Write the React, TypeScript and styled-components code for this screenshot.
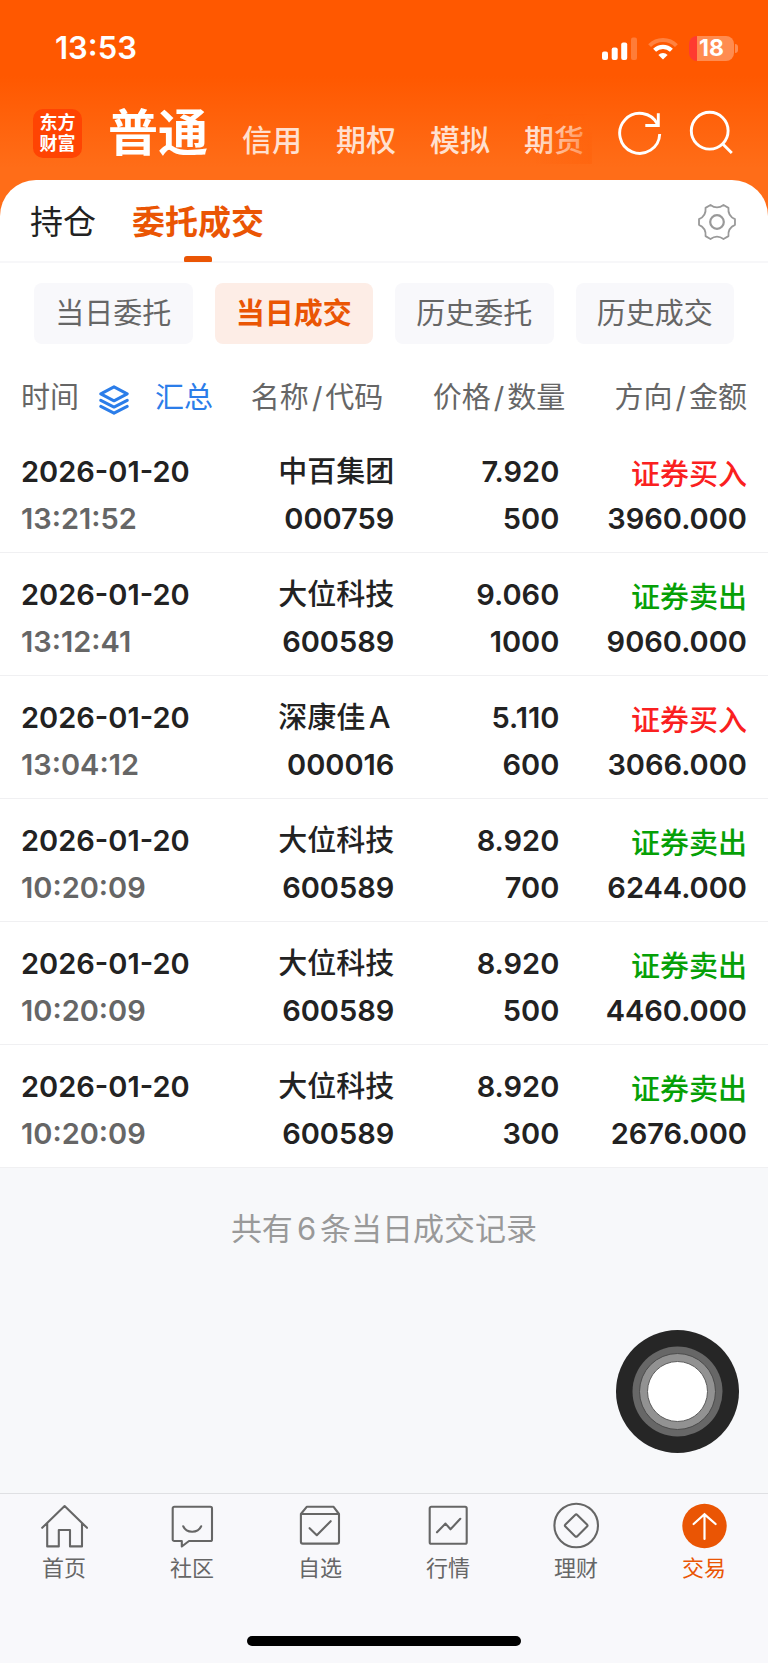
import React from "react";
import styled, { createGlobalStyle } from "styled-components";

const color = {
  accent: "#ea5504",
  text: "#222222",
  muted: "#666666",
  faint: "#999999",
  blue: "#2b7de9",
  buy: "#fa2020",
  sell: "#06a006",
  page: "#f7f8fa",
};

const GlobalStyle = createGlobalStyle`
  *, *::before, *::after { box-sizing: border-box; }
  body {
    margin: 0;
    background: ${color.page};
    color: ${color.text};
    font-family: Inter, "Noto Sans CJK SC", sans-serif;
  }
  button { margin: 0; padding: 0; border: 0; background: none; color: inherit; font: inherit; cursor: pointer; }
  a { color: inherit; text-decoration: none; }
  svg { display: block; flex: none; }
`;

const Page = styled.div`
  display: flex;
  flex-direction: column;
  min-height: 100vh;
`;

const Header = styled.header`
  height: 232px;
  background: linear-gradient(#ff5800 0, #ff5800 76px, #ff6d18 168px);
  color: #fff;
`;

const StatusBar = styled.div`
  display: flex;
  align-items: center;
  justify-content: space-between;
  height: 96px;
  padding: 0 29px 0 55px;
`;

const Clock = styled.time`
  font-size: 31px;
  font-weight: 600;
  line-height: 40px;
`;

const StatusIcons = styled.div`
  display: flex;
  align-items: center;
  gap: 11px;
`;

const Battery = styled.div`
  position: relative;
  width: 45px;
  height: 25px;
  margin-right: 5px;
  border-radius: 8px;
  background: linear-gradient(90deg, #ff3b30 8px, #ff8c50 8px);
  font-size: 23px;
  font-weight: 700;
  line-height: 25px;
  text-align: center;

  &::after {
    content: "";
    position: absolute;
    top: 8px;
    right: -4px;
    width: 3px;
    height: 9px;
    border-radius: 0 4px 4px 0;
    background: #ff8c50;
  }
`;

const AccountBar = styled.div`
  display: flex;
  align-items: center;
  height: 74px;
  padding: 0 34px 0 33px;
`;

const Logo = styled.div`
  flex: none;
  width: 49px;
  height: 49px;
  padding-top: 4px;
  border-radius: 10px;
  background: #ff4403;
  font-family: "Liberation Sans", "Noto Sans CJK SC", sans-serif;
  font-size: 18px;
  font-weight: 700;
  line-height: 21px;
  text-align: center;
`;

const AccountTabs = styled.nav`
  position: relative;
  display: flex;
  flex: 1;
  align-items: baseline;
  gap: 34px;
  min-width: 0;
  height: 78px;
  margin-right: 24px;
  padding-left: 26px;
  overflow: hidden;
  white-space: nowrap;

  &::after {
    content: "";
    position: absolute;
    top: 0;
    right: 0;
    width: 56px;
    height: 74px;
    background: linear-gradient(90deg, rgba(255, 100, 14, 0), rgba(255, 100, 14, 0.7));
    mask-image: linear-gradient(transparent 20px, #000 40px);
    mask-size: 100% 70px;
    mask-repeat: no-repeat;
  }
`;

const AccountTab = styled.button<{ $active?: boolean }>`
  flex: none;
  color: ${(p) => (p.$active ? "#fff" : "#ffe0d0")};
  font-size: ${(p) => (p.$active ? 50 : 30)}px;
  font-weight: ${(p) => (p.$active ? 700 : 500)};
  line-height: 78px;
`;

const HeaderActions = styled.div`
  display: flex;
  gap: 22px;
`;

const Sheet = styled.main`
  flex: 1;
  margin-top: -52px;
`;

const SectionTabs = styled.div`
  display: flex;
  align-items: stretch;
  gap: 36px;
  height: 83px;
  padding: 0 32px 0 30px;
  border-bottom: 2px solid #f7f7f9;
  border-radius: 36px 36px 0 0;
  background: #fff;
`;

const SectionTab = styled.button<{ $active?: boolean }>`
  position: relative;
  padding-top: 2px;
  color: ${(p) => (p.$active ? color.accent : color.text)};
  font-size: 33px;
  font-weight: ${(p) => (p.$active ? 700 : 400)};
  line-height: 78px;

  &::after {
    content: "";
    display: ${(p) => (p.$active ? "block" : "none")};
    position: absolute;
    bottom: -1px;
    left: calc(50% - 14px);
    width: 28px;
    height: 6px;
    border-radius: 3px 3px 1px 1px;
    background: ${color.accent};
  }
`;

const SettingsButton = styled.button`
  margin-left: auto;
  padding-top: 2px;
  color: ${color.faint};
`;

const Filters = styled.div`
  display: grid;
  grid-template-columns: repeat(4, 1fr);
  gap: 22px;
  padding: 20px 34px 21px;
  background: #fff;
`;

const Filter = styled.button<{ $active?: boolean }>`
  height: 61px;
  padding-top: 1px;
  border-radius: 8px;
  background: ${(p) => (p.$active ? "#fdede6" : "#f8f8fb")};
  color: ${(p) => (p.$active ? color.accent : color.muted)};
  font-size: 29px;
  font-weight: ${(p) => (p.$active ? 700 : 400)};
  line-height: 60px;
`;

const Table = styled.table`
  width: 100%;
  border-collapse: separate;
  border-spacing: 0;
  table-layout: fixed;
  background: #fff;
  font-size: 29px;
`;

const HeadCell = styled.th<{ $width: string; $end?: number }>`
  width: ${(p) => p.$width};
  height: 65px;
  padding: 0 ${(p) => p.$end ?? 0}px 0 0;
  color: ${color.muted};
  font-weight: 400;
  line-height: 44px;
  text-align: right;
  white-space: nowrap;

  &:first-child { padding-left: 21px; text-align: left; }
`;

const Slash = styled.span`
  margin: 0 3px;
`;

const TimeHead = styled.div`
  display: flex;
  align-items: center;
  gap: 20px;
`;

const SummaryButton = styled.button`
  display: flex;
  align-items: center;
  gap: 26px;
  color: ${color.blue};

  svg { margin-top: 4px; }
`;

const Cell = styled.td<{ $end?: number }>`
  padding: 18px ${(p) => p.$end ?? 0}px 10px 0;
  border-bottom: 1px solid #f0f0f2;
  font-weight: 600;
  line-height: 47px;
  text-align: right;
  white-space: nowrap;

  &:first-child { padding-left: 21px; text-align: left; }
`;

const Line = styled.div`
  height: 47px;
`;

const Name = styled(Line)`
  font-weight: 500;
`;

const Time = styled(Line)`
  color: ${color.muted};
`;

const Side = styled(Line)<{ $buy: boolean }>`
  padding-top: 3px;
  color: ${(p) => (p.$buy ? color.buy : color.sell)};
  font-weight: 500;
`;

const Total = styled.p`
  margin: 0;
  padding: 39px 0;
  color: ${color.faint};
  font-size: 31px;
  line-height: 44px;
  text-align: center;
`;

const Count = styled.span`
  margin: 0 4px;
`;

const AssistiveTouch = styled.button`
  position: fixed;
  right: 29px;
  bottom: 210px;
`;

const TabBar = styled.footer`
  padding: 8px 0 17px;
  border-top: 1px solid #dfe0e3;
  background: #f8f8fb;
`;

const TabList = styled.nav`
  display: grid;
  grid-template-columns: repeat(6, 1fr);
`;

const TabLink = styled.a<{ $active?: boolean }>`
  display: flex;
  flex-direction: column;
  align-items: center;
  color: ${(p) => (p.$active ? color.accent : color.muted)};
  font-size: 22px;
  line-height: 36px;
`;

const HomeIndicator = styled.div`
  width: 274px;
  height: 10px;
  margin: 50px auto 0;
  border-radius: 5px;
  background: #000;
`;

function SignalIcon() {
  return (
    <svg width="35" height="23" viewBox="0 0 35 23" fill="#fff" aria-hidden="true">
      <rect x="0" y="14.5" width="6" height="8.5" rx="2" />
      <rect x="9.7" y="10.5" width="6" height="12.5" rx="2" />
      <rect x="19.2" y="5.5" width="6" height="17.5" rx="2" />
      <rect x="29" y="0.5" width="6" height="22.5" rx="2" opacity=".22" />
    </svg>
  );
}

function WifiIcon() {
  return (
    <svg width="30" height="23" viewBox="0 0 30 23" fill="none" stroke="#fff" aria-hidden="true">
      <path d="M1.6 8.6a19 19 0 0 1 26.8 0" strokeWidth="4" opacity=".25" />
      <path d="M6.6 13.3a12 12 0 0 1 16.8 0" strokeWidth="4.2" />
      <path d="M15 22.6l-4.6-4.7a6.6 6.6 0 0 1 9.2 0z" fill="#fff" stroke="none" />
    </svg>
  );
}

function RefreshIcon() {
  return (
    <svg width="48" height="48" viewBox="0 0 48 48" fill="none" stroke="#fff" strokeWidth="2.9" aria-hidden="true">
      <path d="M43.7 25A20 20 0 1 1 41.6 15.4" />
      <path d="M42.3 4.2v12.3H29.3" />
    </svg>
  );
}

function SearchIcon() {
  return (
    <svg width="48" height="48" viewBox="0 0 48 48" fill="none" stroke="#fff" strokeWidth="2.9" aria-hidden="true">
      <circle cx="23.7" cy="21.7" r="18.4" />
      <path d="M36.8 35l9 9" />
    </svg>
  );
}

const polar = (deg: number, r: number) => {
  const a = (deg * Math.PI) / 180;
  return `${(19 + r * Math.cos(a)).toFixed(2)} ${(19 + r * Math.sin(a)).toFixed(2)}`;
};

const gearPath =
  `M${polar(-9, 18.2)}` +
  [0, 60, 120, 180, 240, 300]
    .map((t) => `L${polar(t + 9, 18.2)}C${polar(t + 21, 14)} ${polar(t + 39, 14)} ${polar(t + 51, 18.2)}`)
    .join("") +
  "Z";

function GearIcon() {
  return (
    <svg width="38" height="38" viewBox="0 0 38 38" fill="none" stroke="currentColor" strokeWidth="1.8" strokeLinejoin="round" aria-hidden="true">
      <path d={gearPath} />
      <circle cx="19" cy="19" r="6.8" strokeWidth="2.2" />
    </svg>
  );
}

function LayersIcon() {
  return (
    <svg width="30" height="30" viewBox="0 0 30 30" fill="none" stroke="currentColor" strokeWidth="3" strokeLinejoin="round" strokeLinecap="round" aria-hidden="true">
      <path d="M15 1.8L28.2 8.8 15 15.8 1.8 8.8z" />
      <path d="M1.8 15.3L15 22.1l13.2-6.8" />
      <path d="M1.8 21.4L15 28.2l13.2-6.8" />
    </svg>
  );
}

function TabIcon({ children }: { children: React.ReactNode }) {
  return (
    <svg width="48" height="48" viewBox="0 0 48 48" fill="none" stroke="currentColor" strokeWidth="2.1" strokeLinejoin="round" strokeLinecap="round" aria-hidden="true">
      {children}
    </svg>
  );
}

const tabs = [
  { label: "首页", icon: <path d="M2.2 25.8L24.6 4 47 25.8M7.2 21.5V44.4H18.8V28H30V44.4H42V21.5" /> },
  {
    label: "社区",
    icon: (
      <>
        <path d="M6.3 4.8H42.4a1.6 1.6 0 0 1 1.6 1.6V37.4a1.6 1.6 0 0 1-1.6 1.6H21L13.8 44.5V39H6.3a1.6 1.6 0 0 1-1.6-1.6V6.4a1.6 1.6 0 0 1 1.6-1.6z" />
        <path d="M15.2 24.3C18.5 31.6 29.8 31.6 33.2 24.3" />
      </>
    ),
  },
  {
    label: "自选",
    icon: (
      <>
        <path d="M4.9 12L10.7 4.8H37.6L43 12V39.8a1.8 1.8 0 0 1-1.8 1.8H6.7a1.8 1.8 0 0 1-1.8-1.8zM4.9 12H43" />
        <path d="M13.6 26.2L20.8 33.2 34.7 19.2" />
      </>
    ),
  },
  {
    label: "行情",
    icon: (
      <>
        <rect x="5.7" y="4.8" width="37" height="37" rx="1.6" />
        <path d="M13 30.3L21.5 21.6 26.5 27.3 36.3 16.8" />
      </>
    ),
  },
  {
    label: "理财",
    icon: (
      <>
        <circle cx="24.2" cy="23.5" r="21.8" />
        <path d="M23.1 12.9a1.6 1.6 0 0 1 2.2 0L35 22.4a1.6 1.6 0 0 1 0 2.2L25.3 34.2a1.6 1.6 0 0 1-2.2 0L13.4 24.6a1.6 1.6 0 0 1 0-2.2z" />
      </>
    ),
  },
  {
    label: "交易",
    active: true,
    icon: (
      <>
        <circle cx="24.5" cy="24" r="22.2" fill="currentColor" stroke="none" />
        <path d="M24.5 37V12.3M13.6 22L24.5 12.3 35.6 22" stroke="#fff" strokeWidth="2.2" strokeLinejoin="miter" />
      </>
    ),
  },
];

const columns = [
  { top: "名称", bottom: "代码", width: "22%", end: 16 },
  { top: "价格", bottom: "数量", width: "22%", end: 3 },
  { top: "方向", bottom: "金额", width: "26%", end: 21 },
];

const trades = [
  { time: "13:21:52", name: "中百集团", code: "000759", price: "7.920", qty: "500", buy: true, amount: "3960.000" },
  { time: "13:12:41", name: "大位科技", code: "600589", price: "9.060", qty: "1000", buy: false, amount: "9060.000" },
  { time: "13:04:12", name: "深康佳Ａ", code: "000016", price: "5.110", qty: "600", buy: true, amount: "3066.000" },
  { time: "10:20:09", name: "大位科技", code: "600589", price: "8.920", qty: "700", buy: false, amount: "6244.000" },
  { time: "10:20:09", name: "大位科技", code: "600589", price: "8.920", qty: "500", buy: false, amount: "4460.000" },
  { time: "10:20:09", name: "大位科技", code: "600589", price: "8.920", qty: "300", buy: false, amount: "2676.000" },
];

export default function App() {
  return (
    <Page>
      <GlobalStyle />
      <Header>
        <StatusBar>
          <Clock>13:53</Clock>
          <StatusIcons>
            <SignalIcon />
            <WifiIcon />
            <Battery>18</Battery>
          </StatusIcons>
        </StatusBar>
        <AccountBar>
          <Logo>东方<br />财富</Logo>
          <AccountTabs>
            <AccountTab $active>普通</AccountTab>
            {["信用", "期权", "模拟", "期货"].map((t) => (
              <AccountTab key={t}>{t}</AccountTab>
            ))}
          </AccountTabs>
          <HeaderActions>
            <button aria-label="刷新"><RefreshIcon /></button>
            <button aria-label="搜索"><SearchIcon /></button>
          </HeaderActions>
        </AccountBar>
      </Header>

      <Sheet>
        <SectionTabs>
          <SectionTab>持仓</SectionTab>
          <SectionTab $active>委托成交</SectionTab>
          <SettingsButton aria-label="设置"><GearIcon /></SettingsButton>
        </SectionTabs>
        <Filters>
          <Filter>当日委托</Filter>
          <Filter $active>当日成交</Filter>
          <Filter>历史委托</Filter>
          <Filter>历史成交</Filter>
        </Filters>
        <Table>
          <thead>
            <tr>
              <HeadCell scope="col" $width="30%">
                <TimeHead>
                  时间
                  <SummaryButton><LayersIcon />汇总</SummaryButton>
                </TimeHead>
              </HeadCell>
              {columns.map((c) => (
                <HeadCell key={c.top} scope="col" $width={c.width} $end={c.end}>
                  {c.top}<Slash>/</Slash>{c.bottom}
                </HeadCell>
              ))}
            </tr>
          </thead>
          <tbody>
            {trades.map((t, i) => (
              <tr key={i}>
                <Cell>
                  <Line>2026-01-20</Line>
                  <Time>{t.time}</Time>
                </Cell>
                <Cell $end={5}>
                  <Name>{t.name}</Name>
                  <Line>{t.code}</Line>
                </Cell>
                <Cell $end={9}>
                  <Line>{t.price}</Line>
                  <Line>{t.qty}</Line>
                </Cell>
                <Cell $end={21}>
                  <Side $buy={t.buy}>{t.buy ? "证券买入" : "证券卖出"}</Side>
                  <Line>{t.amount}</Line>
                </Cell>
              </tr>
            ))}
          </tbody>
        </Table>
        <Total>共有<Count>6</Count>条当日成交记录</Total>
      </Sheet>

      <AssistiveTouch aria-label="辅助触控">
        <svg width="123" height="123" viewBox="0 0 123 123" aria-hidden="true">
          <circle cx="61.5" cy="61.5" r="61.5" fill="#262626" />
          <circle cx="61.5" cy="61.5" r="45" fill="#676767" />
          <circle cx="61.5" cy="61.5" r="38" fill="#929292" stroke="#4c4c4c" />
          <circle cx="61.5" cy="61.5" r="30" fill="#fff" stroke="#5c5c5c" />
        </svg>
      </AssistiveTouch>

      <TabBar>
        <TabList>
          {tabs.map((t) => (
            <TabLink key={t.label} href="#" $active={t.active}>
              <TabIcon>{t.icon}</TabIcon>
              {t.label}
            </TabLink>
          ))}
        </TabList>
        <HomeIndicator />
      </TabBar>
    </Page>
  );
}
